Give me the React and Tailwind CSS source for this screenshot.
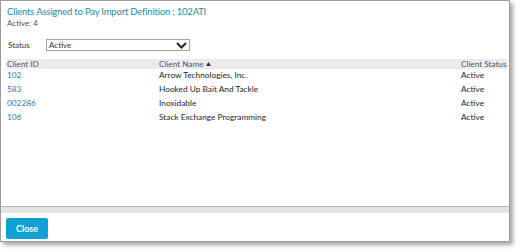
import { useState } from "react";

const clients = [
  { id: "102", name: "Arrow Technologies, Inc.", status: "Active" },
  { id: "583", name: "Hooked Up Bait And Tackle", status: "Active" },
  { id: "002286", name: "Inoxidable", status: "Active" },
  { id: "106", name: "Stack Exchange Programming", status: "Active" },
];

function Chevron() {
  return (
    <svg width="11" height="7" viewBox="0 0 11 7" className="shrink-0">
      <polyline points="1,1 5.5,5.5 10,1" fill="none" stroke="#2b2b2b" strokeWidth="2.2" />
    </svg>
  );
}

function SortUp() {
  return (
    <svg width="5" height="4" viewBox="0 0 5 4" className="ml-[2px]">
      <polygon points="0,4 2.5,0 5,4" fill="#333" />
    </svg>
  );
}

export default function App() {
  const [status] = useState("Active");

  return (
    <div className="w-[520px] h-[252px] bg-white font-['Lato',sans-serif]">
      <div className="w-[510px] h-[242px] flex flex-col bg-white border border-[#9c9c9c] shadow-[3px_3px_4px_rgba(0,0,0,0.35)]">
        <div className="flex-1 flex flex-col pl-[5px] pr-[1px]">
          <h1 className="mt-[5px] text-[9.5px] leading-[12px] tracking-[-0.2px] text-[#1b8ca3] pl-[1px] whitespace-nowrap">
            Clients Assigned to Pay Import Definition : 102ATI
          </h1>
          <div className="text-[8px] leading-[10px] text-[#555] pl-[1px]">Active: 4</div>

          <div className="mt-[11px] flex items-center">
            <label className="w-[40px] pl-[2px] text-[8px] leading-[10px] text-[#333]">Status</label>
            <div className="w-[144px] h-[12px] border border-[#a3a3a3] flex items-center justify-between pl-[2px] pr-[2px]">
              <span className="text-[8px] leading-[10px] text-[#333]">{status}</span>
              <Chevron />
            </div>
          </div>

          <div className="mt-[8px]">
            <div className="grid grid-cols-[152px_302px_1fr] h-[10px] items-center bg-[#ebebeb] pl-[1px] text-[8.2px] leading-[10px] text-[#4d5874] whitespace-nowrap">
              <span>Client ID</span>
              <span className="flex items-center">Client Name<SortUp /></span>
              <span>Client Status</span>
            </div>
            {clients.map((c) => (
              <div
                key={c.id}
                className="grid grid-cols-[152px_302px_1fr] h-[14px] items-start pt-[1px] pl-[1px] text-[8.3px] leading-[10px] whitespace-nowrap"
              >
                <span className="text-[#2c7da0]">{c.id}</span>
                <span className="text-[#1f1f1f]">{c.name}</span>
                <span className="text-[#1f1f1f]">{c.status}</span>
              </div>
            ))}
          </div>
        </div>

        <div className="border-t border-[#b4b4b4] h-[7px] bg-[#e3e3e3]" />
        <div className="h-[28px] flex items-start pl-[5px] pt-[5px]">
          <button className="w-[42px] h-[21px] rounded-[2px] bg-[#12a0d2] text-white text-[9px] leading-[21px] font-bold">
            Close
          </button>
        </div>
      </div>
    </div>
  );
}
